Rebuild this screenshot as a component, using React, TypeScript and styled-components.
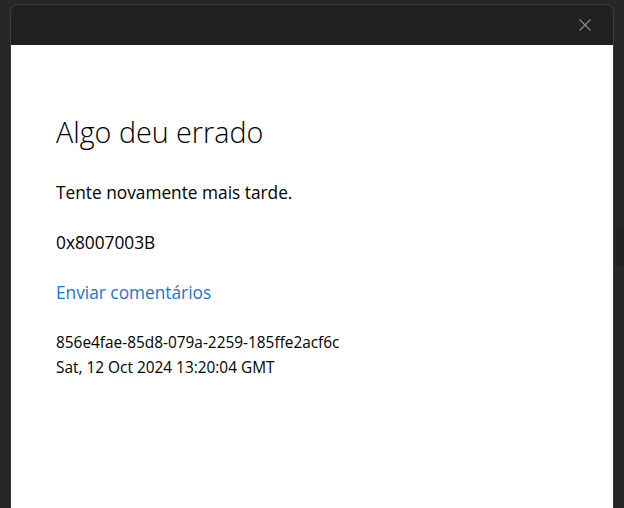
import styled, { createGlobalStyle } from 'styled-components'

const GlobalStyle = createGlobalStyle`
  html, body {
    margin: 0;
    padding: 0;
    height: 100%;
    overflow: hidden;
    background: #272727;
  }
  #root {
    height: 100%;
  }
`

const Backdrop = styled.div`
  display: flex;
  height: 100%;
  padding: 4px 0 0 10px;
  box-sizing: border-box;
  background: #272727;
`

const Dialog = styled.div`
  display: flex;
  flex-direction: column;
  width: 604px;
  height: 540px;
  flex-shrink: 0;
  border: 1px solid #3d3d3d;
  border-radius: 8px 8px 0 0;
  overflow: hidden;
  box-sizing: border-box;
`

const TitleBar = styled.div`
  display: flex;
  justify-content: flex-end;
  align-items: center;
  height: 40px;
  padding-right: 21px;
  background: #202020;
`

const CloseButton = styled.button`
  display: flex;
  align-items: center;
  justify-content: center;
  width: 14px;
  height: 14px;
  padding: 0;
  border: 0;
  background: transparent;
  color: #8b8b8b;
  cursor: pointer;
`

const Body = styled.div`
  flex: 1;
  background: #ffffff;
  padding: 67px 45px 0 45px;
  font-family: 'Open Sans', 'Noto Sans', sans-serif;
  color: #000000;
`

const Heading = styled.h1`
  margin: 0 0 27px;
  font-size: 28.7px;
  font-weight: 300;
  line-height: 40px;
`

const Text = styled.p`
  margin: 0 0 23px;
  font-size: 17.3px;
  line-height: 27px;
`

const Link = styled.a`
  display: block;
  margin-bottom: 24px;
  font-size: 17.3px;
  line-height: 27px;
  color: #1a75cf;
  text-decoration: none;
`

const Meta = styled.div`
  font-size: 15.4px;
  line-height: 25px;
`

const SideStrip = styled.div`
  display: flex;
  flex-direction: column;
  flex: 1;
`

const Thumb = styled.div`
  margin-top: 224px;
  height: 38px;
  background: #222222;
`

export default function App() {
  return (
    <>
      <GlobalStyle />
      <Backdrop>
        <Dialog>
          <TitleBar>
            <CloseButton aria-label='Fechar'>
              <svg width='12' height='12' viewBox='0 0 12 12'>
                <path d='M0.5 0.5 L11.5 11.5 M11.5 0.5 L0.5 11.5' stroke='currentColor' strokeWidth='1.1' />
              </svg>
            </CloseButton>
          </TitleBar>
          <Body>
            <Heading>Algo deu errado</Heading>
            <Text>Tente novamente mais tarde.</Text>
            <Text>0x8007003B</Text>
            <Link href='#'>Enviar comentários</Link>
            <Meta>856e4fae-85d8-079a-2259-185ffe2acf6c</Meta>
            <Meta>Sat, 12 Oct 2024 13:20:04 GMT</Meta>
          </Body>
        </Dialog>
        <SideStrip>
          <Thumb />
        </SideStrip>
      </Backdrop>
    </>
  )
}
